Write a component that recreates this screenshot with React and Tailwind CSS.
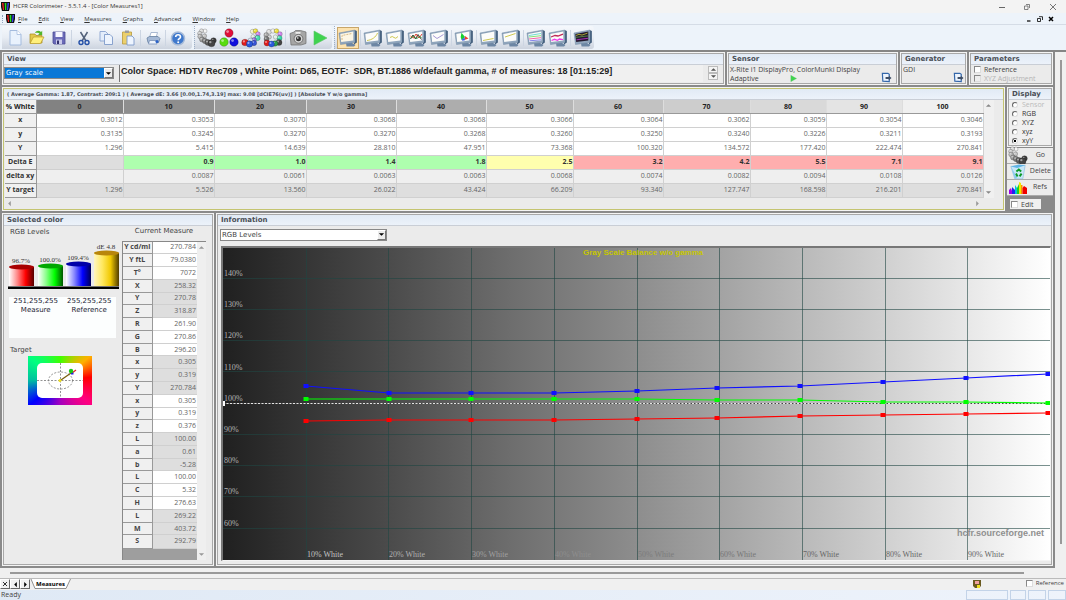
import { clsx } from 'clsx';

const menus = ['File', 'Edit', 'View', 'Measures', 'Graphs', 'Advanced', 'Window', 'Help'];

const columns = [
  { level: 0, head: 'bg-[#828282]', x: '0.3012', y: '0.3135', Y: '1.296', dE: '', dxy: '', target: '1.296', tone: '' },
  { level: 10, head: 'bg-[#8e8e8e]', x: '0.3053', y: '0.3245', Y: '5.415', dE: '0.9', dxy: '0.0087', target: '5.526', tone: 'bg-[#aeffae]' },
  { level: 20, head: 'bg-[#999999]', x: '0.3070', y: '0.3270', Y: '14.639', dE: '1.0', dxy: '0.0061', target: '13.560', tone: 'bg-[#aeffae]' },
  { level: 30, head: 'bg-[#a3a3a3]', x: '0.3068', y: '0.3270', Y: '28.810', dE: '1.4', dxy: '0.0063', target: '26.022', tone: 'bg-[#aeffae]' },
  { level: 40, head: 'bg-[#adadad]', x: '0.3068', y: '0.3268', Y: '47.951', dE: '1.8', dxy: '0.0063', target: '43.424', tone: 'bg-[#aeffae]' },
  { level: 50, head: 'bg-[#b7b7b7]', x: '0.3066', y: '0.3260', Y: '73.368', dE: '2.5', dxy: '0.0068', target: '66.209', tone: 'bg-[#ffffae]' },
  { level: 60, head: 'bg-[#c2c2c2]', x: '0.3064', y: '0.3250', Y: '100.320', dE: '3.2', dxy: '0.0074', target: '93.340', tone: 'bg-[#ffaeae]' },
  { level: 70, head: 'bg-[#cdcdcd]', x: '0.3062', y: '0.3240', Y: '134.572', dE: '4.2', dxy: '0.0082', target: '127.747', tone: 'bg-[#ffaeae]' },
  { level: 80, head: 'bg-[#d9d9d9]', x: '0.3059', y: '0.3226', Y: '177.420', dE: '5.5', dxy: '0.0094', target: '168.598', tone: 'bg-[#ffaeae]' },
  { level: 90, head: 'bg-[#e4e4e4]', x: '0.3054', y: '0.3211', Y: '222.474', dE: '7.1', dxy: '0.0108', target: '216.201', tone: 'bg-[#ffaeae]' },
  { level: 100, head: 'bg-[#f0f0f0]', x: '0.3046', y: '0.3193', Y: '270.841', dE: '9.1', dxy: '0.0126', target: '270.841', tone: 'bg-[#ffaeae]' },
];

const gridRows = [
  { label: 'x', key: 'x', bg: 'bg-white' },
  { label: 'y', key: 'y', bg: 'bg-white' },
  { label: 'Y', key: 'Y', bg: 'bg-white' },
  { label: 'Delta E', key: 'dE', bg: 'bg-[#dedede]' },
  { label: 'delta xy', key: 'dxy', bg: 'bg-[#efefef]' },
  { label: 'Y target', key: 'target', bg: 'bg-[#dedede]' },
];

const measures = [
  ['Y cd/ml', '270.784', false], ['Y ftL', '79.0380', false], ['T°', '7072', false],
  ['X', '258.32', true], ['Y', '270.78', true], ['Z', '318.87', true],
  ['R', '261.90', false], ['G', '270.86', false], ['B', '296.20', false],
  ['x', '0.305', true], ['y', '0.319', true], ['Y', '270.784', true],
  ['x', '0.305', false], ['y', '0.319', false], ['z', '0.376', false],
  ['L', '100.00', true], ['a', '0.61', true], ['b', '-5.28', true],
  ['L', '100.00', false], ['C', '5.32', false], ['H', '276.63', false],
  ['L', '269.22', true], ['M', '403.72', true], ['S', '292.79', true],
];

const plotX = [83, 166, 248, 331, 414, 494, 577, 660, 743, 825];
const series = [
  { color: '#1010ff', ys: [138, 145, 145, 145, 143, 140, 138, 134, 130, 126] },
  { color: '#00ff00', ys: [151, 151, 151, 151, 151, 152, 152, 154, 154, 155] },
  { color: '#ff0000', ys: [173, 172, 172, 172, 171, 170, 168, 167, 166, 165] },
];

/* ---------- icons ---------- */

function Ico({ children, size = 'size-5' }) {
  return <svg viewBox="0 0 20 20" className={size} aria-hidden="true">{children}</svg>;
}

function AppIcon() {
  return (
    <svg viewBox="0 0 9 9" className="size-[9px]" aria-hidden="true">
      <path d="M0 0h9v5l-1 4H1L0 5z" fill="#111" />
      <path d="M1 1h1.500l.5 7H2z" fill="#f22" />
      <path d="M3.700 1h1.600v7H4z" fill="#2d2" />
      <path d="M6.500 1H8L7 8H6z" fill="#44f" />
    </svg>
  );
}

function NewIcon() {
  return <Ico><path d="M5 2.500h7l4 4V17H5z" fill="#e9f2fd" stroke="#a3bbde" /><path d="M12 2.500v4h4" fill="#fff" stroke="#a3bbde" strokeWidth=".8" /></Ico>;
}

function OpenIcon() {
  return (
    <Ico>
      <path d="M3 6h5l1 1.500h6V15H3z" fill="#e2c84a" stroke="#a8891f" strokeWidth=".7" />
      <path d="M3 15.500 6.500 9H17l-3.500 6.500z" fill="#fff07c" stroke="#b89a28" strokeWidth=".7" />
      <path d="M8 5c1-2.500 4-3 6-1l1.200-1.200V7H11l1.500-1.600C11.500 4.500 10 4.500 8 5z" fill="#52b62c" />
    </Ico>
  );
}

function SaveIcon() {
  return (
    <Ico>
      <path d="M4 4h12v12H5l-1-1z" fill="#6a6ab8" stroke="#4c4c96" strokeWidth=".8" />
      <path d="M6.500 4h7v5h-7z" fill="#f5f5ff" /><path d="M7 11.500h6V16H7z" fill="#c9c9ea" /><path d="M8 12.500h2V16H8z" fill="#33336e" />
    </Ico>
  );
}

function CutIcon() {
  return (
    <Ico>
      <path d="M6.500 4 12 13M13.500 4 8 13" stroke="#53627a" strokeWidth="1.500" fill="none" />
      <circle cx="7" cy="14.500" r="2" fill="none" stroke="#2450a8" strokeWidth="1.400" /><circle cx="13" cy="14.500" r="2" fill="none" stroke="#2450a8" strokeWidth="1.400" />
    </Ico>
  );
}

function CopyIcon() {
  return (
    <Ico>
      <path d="M4 3.500h5.500L12 6v7H4z" fill="#e3edfb" stroke="#8aa4d0" strokeWidth=".9" />
      <path d="M8.500 6.500H14L16.500 9v7.500h-8z" fill="#edf4fe" stroke="#7f9bca" strokeWidth=".9" />
    </Ico>
  );
}

function PasteIcon() {
  return (
    <Ico>
      <path d="M4.500 4h9v12h-9z" fill="#ecd06c" stroke="#b99a3c" strokeWidth=".8" /><path d="M7 2.500h4V5H7z" fill="#9c9c9c" />
      <path d="M9 8h5l2 2v7H9z" fill="#eef5ff" stroke="#7d9ac9" strokeWidth=".9" />
    </Ico>
  );
}

function PrintIcon() {
  return (
    <Ico>
      <path d="M8 4.500h6.500l-1.500 5H6.500z" fill="#fff" stroke="#8a9fc0" strokeWidth=".7" />
      <path d="M4 10 6.500 8.500H15l2 2-1.500 4H5z" fill="#a5b9d6" stroke="#66809f" strokeWidth=".8" />
      <path d="M6.500 12.500h6.500l1 3.500H5.500z" fill="#eef4fc" stroke="#6e88b2" strokeWidth=".7" /><circle cx="14" cy="13.500" r="1.500" fill="#2b62c9" />
    </Ico>
  );
}

function HelpIcon() {
  return (
    <Ico>
      <circle cx="10" cy="10.500" r="6.500" fill="#3f78cc" stroke="#a9bcd8" strokeWidth="1.500" />
      <path d="M7.700 9c0-3 4.800-3 4.800 0 0 1.600-2.300 1.600-2.300 3.200" fill="none" stroke="#fff" strokeWidth="1.600" /><circle cx="10.200" cy="14.200" r="1" fill="#fff" />
    </Ico>
  );
}

function Balls({ balls, size }) {
  return (
    <Ico size={size}>
      {balls.map(([cx, cy, r, fill], i) => (
        <g key={i}>
          <circle cx={cx} cy={cy} r={r} fill={fill} stroke="#0006" strokeWidth=".5" />
          <circle cx={cx - r / 3} cy={cy - r / 3} r={r / 3} fill="#fff" opacity=".5" />
        </g>
      ))}
    </Ico>
  );
}

const grayBalls = [[8, 3, 2, '#f4f4f4'], [4.500, 2.800, 2, '#ddd'], [2.800, 5.500, 2.200, '#ccc'], [3, 8.500, 2.300, '#b8b8b8'], [7.500, 8, 2.200, '#c4c4c4'], [5, 11.500, 2.500, '#9a9a9a'], [8, 13, 2.700, '#808080'], [11, 14.500, 3, '#5c5c5c'], [16.500, 12.500, 2.800, '#3c3c3c'], [14.500, 15.300, 3.500, '#444']];
const primaryBalls = [[10, 5, 4.200, '#e0103a'], [5, 14, 4.300, '#58dc10'], [15, 14, 4.300, '#1010dd']];
const satBalls = [[11.500, 3.500, 2.200, '#f4f4d0'], [14.500, 3, 2.300, '#ecdf3c'], [17, 6, 2.300, '#d286ec'], [16.500, 10, 2.700, '#46dcb0'], [12, 8.500, 2, '#e4eee8'], [13, 12, 2.400, '#9a74e0'], [9.500, 12.500, 2.500, '#c8d8ec'], [4, 14.500, 3.300, '#e01c1c'], [13, 15, 2.700, '#3854d4'], [8.500, 16, 3.200, '#2a58dc']];
const allBalls = [[6, 3.800, 2.500, '#ddd'], [10, 3, 2.200, '#f0f0f0'], [13.500, 3, 2.300, '#ecdf3c'], [3.200, 7, 2.400, '#aaa'], [17, 6, 2.300, '#d286ec'], [16.500, 10, 2.600, '#3cd8a8'], [12.500, 9, 2.200, '#dfeee6'], [6.500, 9, 2, '#ccc'], [3.500, 11, 2.500, '#777'], [16, 14.500, 3, '#444'], [4, 15, 3, '#e01c1c'], [12, 15.500, 2.800, '#30a048'], [8.500, 16, 3, '#2a58dc']];

function CameraIcon() {
  return (
    <Ico>
      <path d="M2 5.500 6 4l1.500-1.500h5L18 4v11.500L13 17H3z" fill="#a6a6a6" stroke="#6c6c6c" strokeWidth=".7" />
      <path d="M7.500 4h5v1.800h-5z" fill="#eee" /><circle cx="10.500" cy="10.800" r="4.400" fill="#d8d8d8" stroke="#555" strokeWidth=".7" /><circle cx="10.500" cy="10.800" r="2.500" fill="#333" /><circle cx="9.800" cy="10" r=".8" fill="#fff" />
    </Ico>
  );
}

function PlayIcon({ size }) {
  return <Ico size={size}><path d="M4 3 17 10 4 17z" fill="#3fd34f" stroke="#5cc468" strokeWidth=".6" strokeLinejoin="round" /></Ico>;
}

function Monitor({ dark, cream, children }) {
  return (
    <Ico>
      <path d="M8 15h6l3.500 2-1.500 1.500H8.500z" fill="#6c86a4" />
      <path d="M16.500 2 18.800 3v11.500L16 16.500z" fill="#3c5877" />
      <path d="M1 5 17 2v12.500L2.500 16.500z" fill="#8fa5bc" stroke="#7089a2" strokeWidth=".5" />
      <path d="M2.300 6 15.300 3.500v9L3.200 14z" fill={dark ? '#241a2e' : cream ? '#fdf6e4' : '#fcfcfa'} />
      <g fill="none" strokeWidth=".9">{children}</g>
    </Ico>
  );
}

function ExportIcon() {
  return (
    <svg viewBox="0 0 12 12" className="size-[11px]" aria-hidden="true">
      <path d="M1.500 1.500h6l1.500 1v8l-7-.5z" fill="#edf4fd" stroke="#3467aa" strokeWidth="1.300" />
      <path d="M5 5.500h3.500V4L11.500 6.500 8.500 9V7.500H5z" fill="#3e4e66" />
    </svg>
  );
}

function BinIcon() {
  return (
    <Ico size="size-4">
      <path d="M1 3 19 1.500 16 18.500H6z" fill="#c9e7f8" stroke="#7fb6da" strokeWidth=".7" />
      <path d="M1 3 9 5l10-3.500-8-.8z" fill="#5fb4e6" /><path d="M1.500 3.500 6 18.500l3-1z" fill="#8ccaf0" />
      <path d="M8 9.500 11 7l3 2.500M14.500 12l-2.500 3.500M9.500 15.500 7.500 12" fill="none" stroke="#0c9a28" strokeWidth="2.400" />
    </Ico>
  );
}

function SpectrumIcon() {
  return (
    <svg viewBox="0 0 18 12" className="h-3 w-[18px]" aria-hidden="true">
      <path d="M0 12V8l2-2 1 3v3z" fill="#a000e8" /><path d="M3 12V5l3 3v4z" fill="#2020f0" /><path d="M6 12V3l2 3v6z" fill="#00c8d8" />
      <path d="M8 12V6l2-4v10z" fill="#20d020" /><path d="M10 12V0l2 1v11z" fill="#f0e800" /><path d="M12 12V3h1.500v9z" fill="#ff9000" /><path d="M13.500 12V6l1.500-2 3 2v6z" fill="#f00000" />
    </svg>
  );
}

/* ---------- small controls ---------- */

function Caret({ dir = 'down', className }) {
  const paths = { down: 'M1 2.500h6L4 5.500z', up: 'M1 5.500h6L4 2.500z', left: 'M5.500 1v6L2.500 4z', right: 'M2.500 1v6l3-3z' };
  return <svg viewBox="0 0 8 8" className={clsx('size-[7px]', className)} aria-hidden="true"><path d={paths[dir]} fill="currentColor" /></svg>;
}

function ComboBox({ label, options, selected, className }) {
  return (
    <div className={clsx('relative h-3 border border-[#888] bg-white', className)}>
      <select aria-label={label} className={clsx('block h-full w-full appearance-none px-px text-[7px] leading-[10px] outline-none font-["DejaVu_Sans"]', selected ? 'bg-[#0a78d7] text-white' : 'text-[#444]')}>
        {options.map((o) => <option key={o}>{o}</option>)}
      </select>
      <span className="pointer-events-none absolute inset-y-0 right-0 flex w-[9px] items-center justify-center border border-t-white border-l-white border-r-[#777] border-b-[#777] bg-[#ececec] text-black">
        <Caret />
      </span>
    </div>
  );
}

function Check({ label, disabled, className, size = 'text-[7px]' }) {
  return (
    <label className={clsx('flex items-center gap-[3px] leading-[9px]', size, disabled ? 'text-[#b5b5b5]' : 'text-[#444]', className)}>
      <input type="checkbox" disabled={disabled} className="size-[7px] appearance-none border border-t-[#888] border-l-[#888] border-r-[#ddd] border-b-[#ddd] bg-white checked:bg-[#333] disabled:bg-[#eee]" />
      {label}
    </label>
  );
}

function Panel({ title, className, frame = 'border-[#a8a8a8]', titleSize = 'text-[7px]', children }) {
  return (
    <section className={clsx('flex min-w-0 flex-col border border-[#f4f4f4]', className)}>
      <div className={clsx('flex flex-1 flex-col border bg-[#ebebeb]', frame)}>
        <h2 className={clsx("truncate border-b border-[#c9ced6] bg-gradient-to-b from-[#e1eaf5] to-[#ecf2fa] px-[3px] font-['DejaVu_Sans'] leading-[10px] font-bold text-[#4a4f57]", titleSize)}>{title}</h2>
        {children}
      </div>
    </section>
  );
}

/* ---------- bars ---------- */

function TitleBar() {
  return (
    <header className="flex h-[13px] items-center gap-[3px] bg-[#f3f3f3] pl-px text-[6px] text-[#333]">
      <AppIcon />
      <h1 className="flex-1">HCFR Colorimeter - 3.5.1.4 - [Color Measures1]</h1>
      <div className="flex items-center pr-[10px] text-[#666]">
        <button aria-label="Minimize" className="flex w-[25px] justify-center"><svg viewBox="0 0 6 6" className="size-[6px]"><path d="M0 3.500h6" stroke="currentColor" /></svg></button>
        <button aria-label="Restore" className="flex w-[25px] justify-center"><svg viewBox="0 0 6 6" className="size-[6px]" fill="none" stroke="currentColor" strokeWidth=".8"><path d="M.5 2h3.500v3.500H.5zM2 .5h3.500V4" /></svg></button>
        <button aria-label="Close" className="flex w-[17px] justify-end"><svg viewBox="0 0 6 6" className="size-[6px]"><path d="M0 0l6 6M6 0 0 6" stroke="currentColor" strokeWidth=".9" /></svg></button>
      </div>
    </header>
  );
}

function MenuBar() {
  return (
    <nav className="flex h-3 items-center border-b border-[#d5dce6] bg-[#edf3fa] pr-3 pl-[2px] text-[#333]">
      <span className="mr-[3px] h-2 border-l border-dotted border-[#8fa3bd]" />
      <AppIcon />
      <div className="flex flex-1 gap-[11px] pl-[3px] text-[6px]">
        {menus.map((m) => (
          <button key={m} className="leading-[10px]"><span className="underline">{m[0]}</span>{m.slice(1)}</button>
        ))}
      </div>
      <div className="flex items-center gap-[5px] text-black">
        <button aria-label="Minimize document"><svg viewBox="0 0 6 6" className="block size-[6px]"><path d="M1 5h3.500" stroke="currentColor" strokeWidth="1.200" /></svg></button>
        <button aria-label="Restore document"><svg viewBox="0 0 6 6" className="block size-[6px]" fill="none" stroke="currentColor" strokeWidth=".8"><path d="M.5 2.500h3v3h-3zM2 .7h3.500V4" /></svg></button>
        <button aria-label="Close document"><svg viewBox="0 0 6 6" className="block size-[6px]"><path d="M1 1l4 4M5 1 1 5" stroke="currentColor" strokeWidth="1.500" /></svg></button>
      </div>
    </nav>
  );
}

function Tool({ label, active, children }) {
  return (
    <button aria-label={label} className={clsx('flex h-[22px] w-[22px] items-center justify-center', active && 'border border-[#c8a66a] bg-[#fde2ad]')}>
      {children}
    </button>
  );
}

function Sep() {
  return <span className="mx-px h-4 w-px bg-[#ccd5e2]" />;
}

function ToolGroup({ className, children }) {
  return (
    <div className={clsx('flex h-[23px] items-center rounded-r-[3px] bg-gradient-to-b from-[#f5f8fc] via-[#e8edf4] to-[#cdd4df]', className)}>{children}</div>
  );
}

function Toolbar() {
  return (
    <div className="flex h-[25px] items-center gap-[2px] bg-[#edf3fa] pl-[2px]">
      <ToolGroup className="pr-[3px] pl-[2px]">
        <Tool label="New"><NewIcon /></Tool>
        <Tool label="Open"><OpenIcon /></Tool>
        <Tool label="Save"><SaveIcon /></Tool>
        <Sep />
        <Tool label="Cut"><CutIcon /></Tool>
        <Tool label="Copy"><CopyIcon /></Tool>
        <Tool label="Paste"><PasteIcon /></Tool>
        <Sep />
        <Tool label="Print"><PrintIcon /></Tool>
        <Sep />
        <Tool label="Help"><HelpIcon /></Tool>
      </ToolGroup>
      <ToolGroup className="border-l border-dotted border-[#9db0c8] pr-px pl-px">
        <Tool label="Gray scale measures"><Balls balls={grayBalls} /></Tool>
        <Tool label="Primaries"><Balls balls={primaryBalls} /></Tool>
        <Tool label="Saturations"><Balls balls={satBalls} /></Tool>
        <Tool label="All measures"><Balls balls={allBalls} /></Tool>
        <Sep />
        <Tool label="Capture"><CameraIcon /></Tool>
        <Tool label="Run"><PlayIcon /></Tool>
      </ToolGroup>
      <ToolGroup className="border-l border-dotted border-[#9db0c8] pl-[2px]">
        <Tool label="RGB levels" active><Monitor cream><path d="M4 12V7.500l10-2" stroke="#d4b27a" strokeDasharray="2 1" /></Monitor></Tool>
        <Sep />
        <Tool label="Luminance"><Monitor><path d="M4 12.500C9 12 13 9 14.500 5" stroke="#c8c23c" /></Monitor></Tool>
        <Tool label="Gamma"><Monitor><path d="M5 9.500q2.500-2 4 0t4-1" stroke="#c8c23c" /></Monitor></Tool>
        <Tool label="Color temperature"><Monitor><path d="M3.500 11 6 7l2.500 4L11 6.500l3.500 5" stroke="#222" /><path d="m3.500 8 3 2L9 6l3 4 3-4" stroke="#e03020" /><path d="m3.500 10 3-2 3 3 3-3 2 2" stroke="#2a9a3a" /></Monitor></Tool>
        <Tool label="Near black"><Monitor><path d="m4 7.500 4 3 6.500-4" stroke="#9c8cd0" /></Monitor></Tool>
        <Sep />
        <Tool label="CIE chart"><Monitor><path d="M7.500 4.800Q6 9 7.500 12l3.500-3z" fill="#14d030" stroke="none" /><path d="m11 8 3.500 2.500L10.500 12z" fill="#f04030" stroke="none" /><path d="m7.500 11.800 3-2.500.5 3-2.500.5z" fill="#4060e0" stroke="none" /></Monitor></Tool>
        <Sep />
        <Tool label="Shadow luminance"><Monitor><path d="m4 12.500 10.500-2" stroke="#c8c23c" /></Monitor></Tool>
        <Tool label="Highlight luminance"><Monitor><path d="m4 9 10.500-3.500" stroke="#c8c23c" /></Monitor></Tool>
        <Sep />
        <Tool label="Saturation luminance"><Monitor><path d="m3 7.500 12-2" stroke="#5ed8d0" /><path d="m3 9 12-1.300" stroke="#7add6a" /><path d="M3 11 15 9.700" stroke="#f050a0" /><path d="m3.500 12.800 11.500-1" stroke="#7474e8" /></Monitor></Tool>
        <Tool label="Saturation shift"><Monitor><path d="m3 9 4-1.500 3 .5 5-1.800" stroke="#c02858" strokeWidth="1.300" /><path d="m3.500 12.500 3-1.200 3 1 2-1.300 3.500.7" stroke="#f03ce8" strokeWidth="1.300" /></Monitor></Tool>
        <Sep />
        <Tool label="Measures history"><Monitor dark><path d="m3 7.500 3-1.200 3 .8 5.500-2" stroke="#b4b430" /><path d="m3 9.300 5-.6 7-.8" stroke="#588848" /><path d="m3.500 11.800 11.500-1.500" stroke="#b030c0" /></Monitor></Tool>
      </ToolGroup>
    </div>
  );
}

/* ---------- top row ---------- */

function TopRow() {
  return (
    <div className="flex gap-[2px]">
      <Panel title="View" className="flex-1">
        <div className="flex flex-1 items-start gap-[5px] pr-[5px]">
          <ComboBox label="View" options={['Gray scale', 'Near black', 'Near white', 'Primaries']} selected className="mt-[2px] w-[110px]" />
          <div className="h-[17px] min-w-0 flex-1 overflow-hidden border-l border-[#777] bg-[#f0f0f0] pl-px font-['Liberation_Sans'] text-[9px] leading-[13px] font-bold whitespace-pre text-[#222]">
            {'Color Space: HDTV Rec709 , White Point: D65, EOTF:  SDR, BT.1886 w/default gamma, # of measures: 18 [01:15:29]'}
          </div>
          <div className="mt-px flex flex-col text-[#555]">
            <button aria-label="Previous" className="flex h-[7px] w-[10px] items-center justify-center border border-[#bbb] bg-[#f4f4f4]"><Caret dir="up" /></button>
            <button aria-label="Next" className="flex h-[7px] w-[10px] items-center justify-center border border-[#bbb] bg-[#f4f4f4]"><Caret /></button>
          </div>
        </div>
      </Panel>
      <Panel title="Sensor" className="w-[171px]">
        <div className="flex flex-1 justify-between pr-1 pl-px text-[7px] leading-[9px] text-[#444]">
          <div>
            <p className="whitespace-nowrap">X-Rite i1 DisplayPro, ColorMunki Display</p>
            <p className="flex items-center gap-[30px]">Adaptive <PlayIcon size="size-[9px]" /></p>
          </div>
          <button aria-label="Configure sensor" className="self-end"><ExportIcon /></button>
        </div>
      </Panel>
      <Panel title="Generator" className="w-[67px]">
        <div className="flex flex-1 justify-between px-px text-[7px] leading-[9px] text-[#444]">
          GDI
          <button aria-label="Configure generator" className="self-end"><ExportIcon /></button>
        </div>
      </Panel>
      <Panel title="Parameters" className="w-[84px]">
        <div className="flex flex-col pl-[3px]">
          <Check label="Reference" />
          <Check label="XYZ Adjustment" disabled />
        </div>
      </Panel>
    </div>
  );
}

/* ---------- measures grid ---------- */

function MeasuresGrid() {
  return (
    <Panel
      title="( Average Gamma: 1.87, Contrast: 209:1 ) ( Average dE: 3.66 [0.00,1.74,3.19] max: 9.08 [dCIE76(uv)] ) [Absolute Y w/o gamma]"
      titleSize="text-[5px]"
      frame="border-[#c4c470]"
      className="flex-1"
    >
      <div className="flex pr-[12px] pl-px">
        <table className="w-full table-fixed border-collapse text-[7px]">
          <colgroup>
            <col className="w-[31px]" /><col className="w-[87px]" /><col className="w-[91px]" /><col className="w-[92px]" />
            <col className="w-[90px]" /><col className="w-[90px]" /><col className="w-[87px]" /><col className="w-[90px]" />
            <col className="w-[87px]" /><col className="w-[76px]" /><col className="w-[76px]" /><col className="w-[81px]" />
          </colgroup>
          <thead>
            <tr className="h-[13px] leading-[11px] text-[#222]">
              <th className="border-r border-b border-[#999] bg-[#f0f0f0]">% White</th>
              {columns.map((c) => <th key={c.level} className={clsx('border-r border-b border-r-[#ddd] border-b-[#999]', c.head)}>{c.level}</th>)}
            </tr>
          </thead>
          <tbody>
            {gridRows.map((r) => (
              <tr key={r.key} className="h-[14px] leading-3">
                <th className="border-r border-b border-[#999] bg-[#f0f0f0] whitespace-nowrap text-[#333]">{r.label}</th>
                {columns.map((c) => (
                  <td key={c.level} className={clsx('border-r border-b border-[#d0d0d0] text-right', r.key === 'dE' ? [c.tone || r.bg, 'font-bold text-[#333]'] : [r.bg, 'text-[#666]'])}>{c[r.key]}</td>
                ))}
              </tr>
            ))}
          </tbody>
        </table>
        <div className="flex w-[10px] shrink-0 flex-col items-center justify-between bg-[#f0f0f0] py-[2px] text-[#888]">
          <Caret dir="up" /><Caret />
        </div>
      </div>
      <div className="flex h-[11px] items-center justify-between pr-[22px] pl-[2px] text-[#999]">
        <Caret dir="left" /><Caret dir="right" />
      </div>
    </Panel>
  );
}

function SideColumn() {
  return (
    <div className="flex w-[46px] flex-col">
      <Panel title="Display">
        <fieldset className="flex flex-col bg-[#f0f0f0] pl-[3px]">
          {['Sensor', 'RGB', 'XYZ', 'xyz', 'xyY'].map((o) => (
            <label key={o} className={clsx('flex items-center gap-1 text-[7px] leading-[9px]', o === 'Sensor' ? 'text-[#bbb]' : 'text-[#333]')}>
              <input type="radio" name="display" defaultChecked={o === 'xyY'} disabled={o === 'Sensor'} className="size-[6px] appearance-none rounded-full border border-t-[#666] border-l-[#666] border-r-[#ddd] border-b-[#ddd] bg-white checked:bg-[radial-gradient(#000_35%,#fff_45%)]" />
              {o}
            </label>
          ))}
        </fieldset>
      </Panel>
      <div className="mt-px flex flex-col text-[7px] text-[#444]">
        <button className="flex h-4 items-center justify-between border-b border-[#aaa] bg-[#ececec] pr-2 pl-px"><Balls balls={grayBalls} />Go</button>
        <button className="flex h-4 items-center justify-between border-b border-[#aaa] bg-[#ececec] pr-[2px] pl-[3px]"><BinIcon />Delete</button>
        <button className="flex h-4 items-center justify-between border-b border-[#aaa] bg-[#ececec] pr-[6px] pl-[2px]"><SpectrumIcon />Refs</button>
      </div>
      <Check label="Edit" className="mt-[3px] ml-[3px] h-[10px] w-[31px] bg-[#f0f0f0] pl-px" />
    </div>
  );
}

/* ---------- selected color ---------- */

function Cylinder({ x, top, id, label, colors, lid }) {
  return (
    <g>
      <defs>
        <linearGradient id={id}>
          {colors.map((c, i) => <stop key={i} offset={i / (colors.length - 1)} stopColor={c} />)}
        </linearGradient>
      </defs>
      <path d={`M${x} ${top}h25v${44 - top}h-25z`} fill={`url(#${id})`} />
      <ellipse cx={x + 12.5} cy={top} rx="12.5" ry="2.5" fill={lid} />
      <text x={x + 12} y={top - 4} textAnchor="middle" className="fill-[#333] font-['Liberation_Serif'] text-[7px]">{label}</text>
    </g>
  );
}

function LevelBars() {
  return (
    <svg viewBox="0 0 111 48" className="block w-[111px]" role="img" aria-label="RGB levels">
      <Cylinder x={1} top={25} id="red" label="96.7%" colors={['#fff', '#f88', '#f00', '#500']} lid="#a80000" />
      <Cylinder x={30} top={24} id="green" label="100.0%" colors={['#fff', '#8f8', '#0f0', '#050']} lid="#00a800" />
      <Cylinder x={58} top={22} id="blue" label="109.4%" colors={['#fff', '#88f', '#00f', '#005']} lid="#0000a8" />
      <Cylinder x={86} top={11} id="gold" label="dE 4.8" colors={['#fff6c0', '#ffe860', '#f0c800', '#503c00']} lid="#b8860b" />
      <path d="M0 44.500h111v2.500H0z" />
    </svg>
  );
}

function TargetView() {
  return (
    <div className="h-[49px] w-16 bg-[conic-gradient(from_-53deg,#00ff80,#40ff00_15%,#ffb000_29%,#ff0000_38%,#ff0080_50%,#a000c0_65%,#0000ff_79%,#00c0a0_90%,#00ff80)] px-[9px] py-[7px]">
      <div className="h-full w-full rounded-[5px] bg-white">
        <svg viewBox="0 0 46 35" className="block h-full w-full" role="img" aria-label="Target">
          <g fill="none" stroke="#777" strokeWidth=".8" strokeDasharray="2 1.5">
            <path d="M0 17.500h46M23.500 0v35" /><ellipse cx="23.500" cy="17.500" rx="12" ry="8.500" />
          </g>
          <path d="m22.500 18 13-9" stroke="#7a6010" strokeWidth="1.300" />
          <circle cx="23" cy="17.500" r="1.500" fill="#f0e020" />
          <path d="m35 10 4-3" stroke="#e02020" strokeWidth="1.200" /><path d="M34 10.500h2.500" stroke="#2020e0" strokeWidth="2" /><circle cx="34" cy="8" r="2.200" fill="#18c818" />
        </svg>
      </div>
    </div>
  );
}

function SelectedColor() {
  return (
    <Panel title="Selected color" className="w-[212px]">
      <div className="flex flex-1">
        <div className="flex w-[118px] shrink-0 flex-col pl-1 text-[7px] text-[#444]">
          <h3 className="ml-[2px] h-4 font-['DejaVu_Sans'] leading-3">RGB Levels</h3>
          <LevelBars />
          <div className="mt-[7px] ml-px flex h-[41px] w-[107px] justify-around bg-[#fcfefe] text-center font-['DejaVu_Sans'] leading-[9px] text-[#223]">
            <p>251,255,255<br />Measure</p>
            <p>255,255,255<br />Reference</p>
          </div>
          <h3 className="mt-[7px] ml-[2px] font-['DejaVu_Sans'] leading-[11px]">Target</h3>
          <div className="ml-5"><TargetView /></div>
        </div>
        <div className="flex flex-1 flex-col pr-[6px] pb-1">
          <h3 className="h-[15px] text-center font-['DejaVu_Sans'] text-[7px] leading-[11px] text-[#444]">Current Measure</h3>
          <div className="flex flex-1 border-t border-l border-[#888] bg-[#9e9e9e]">
            <table className="h-[307px] flex-1 border-collapse text-[7px] leading-[10px]">
              <tbody>
                {measures.map(([name, value, shaded], i) => (
                  <tr key={i}>
                    <th className="w-[29px] border-r border-b border-[#999] bg-[#f0f0f0] p-0 whitespace-nowrap text-[#444]">{name}</th>
                    <td className={clsx('border-b border-[#d0d0d0] p-0 pr-px text-right text-[#666]', shaded ? 'bg-[#dedede]' : 'bg-white')}>{value}</td>
                  </tr>
                ))}
              </tbody>
            </table>
            <div className="flex w-[9px] flex-col items-center justify-between bg-[#efefef] py-[2px] text-[#999]"><Caret dir="up" /><Caret /></div>
          </div>
        </div>
      </div>
    </Panel>
  );
}

/* ---------- chart ---------- */

const levelFills = ['fill-[#c4c4c4]', 'fill-[#b0b0b0]', 'fill-[#a0a0a0]', 'fill-[#8e8e8e]', 'fill-[#7c7c7c]', 'fill-[#777]', 'fill-[#666]', 'fill-[#666]', 'fill-[#666]'];

function BalanceChart() {
  return (
    <svg viewBox="0 0 827 312" className="block w-full" role="img" aria-label="Gray Scale Balance">
      <defs>
        <linearGradient id="ramp">
          <stop offset="0" stopColor="#202020" />
          <stop offset=".21" stopColor="#4d4d4d" />
          <stop offset=".35" stopColor="#6e6e6e" />
          <stop offset=".58" stopColor="#9e9e9e" />
          <stop offset=".8" stopColor="#d0d0d0" />
          <stop offset="1" stopColor="#ffffff" />
        </linearGradient>
      </defs>
      <rect width="827" height="312" fill="url(#ramp)" />
      <g stroke="#1f4643" strokeOpacity=".6" strokeWidth="1">
        {[1, 2, 3, 4, 5, 6, 7, 8, 9].map((i) => <path key={i} d={`M${Math.round(i * 82.7) + 0.5} 0v312`} />)}
        {[30, 61, 92, 123, 186, 217, 248, 280].map((y) => <path key={y} d={`M0 ${y + 0.5}h827`} />)}
      </g>
      <path d="M0 155.500h827" stroke="#444" /><path d="M0 155.500h827" stroke="#e4e4e4" strokeDasharray="2 1.5" />
      <rect y="153" width="2" height="5" fill="#fff" />
      <g className="fill-[#b4b4b4] font-['Liberation_Serif'] text-[8px]">
        {[140, 130, 120, 110, 100, 90, 80, 70, 60].map((v, i) => <text key={v} x="1" y={Math.round(28 + i * 31.2)}>{v}%</text>)}
        {levelFills.map((fill, i) => (
          <text key={fill + i} x={Math.round((i + 1) * 82.7) + 1} y="309" className={fill}>{(i + 1) * 10}% White</text>
        ))}
      </g>
      {series.map((s) => (
        <g key={s.color}>
          <polyline points={s.ys.map((y, i) => `${plotX[i]},${y}`).join(' ')} fill="none" stroke={s.color} strokeWidth="1.200" />
          {s.ys.map((y, i) => <rect key={i} x={plotX[i] - 2.5} y={y - 2} width="5" height="4" fill={s.color} />)}
        </g>
      ))}
      <text x="420" y="7" textAnchor="middle" className="fill-[#c6c600] font-['Liberation_Sans'] text-[8px] font-bold">Gray Scale Balance w/o gamma</text>
      <text x="821" y="288" textAnchor="end" className="fill-[#8f8f8f] font-['Liberation_Sans'] text-[9px] font-bold">hcfr.sourceforge.net</text>
    </svg>
  );
}

function Information() {
  return (
    <Panel title="Information" className="flex-1">
      <div className="py-[3px] pl-[2px]">
        <ComboBox label="Graph" options={['RGB Levels', 'Luminance', 'Gamma', 'Color temperature']} className="w-[167px]" />
        <div className="mt-[5px] ml-px border-t-2 border-r border-b border-l-2 border-t-[#777] border-r-[#f4f4f4] border-b-[#f4f4f4] border-l-[#777]">
          <BalanceChart />
        </div>
      </div>
    </Panel>
  );
}

/* ---------- bottom ---------- */

function SheetTabs() {
  return (
    <div className="flex h-3 items-start border-t border-[#bbb] bg-[#f0f0f0]">
      <div className="flex">
        {[['Close sheet', 'x'], ['Previous sheet', 'left'], ['Next sheet', 'right']].map(([label, kind]) => (
          <button key={kind} aria-label={label} className="flex h-[10px] w-[10px] items-center justify-center border border-t-white border-l-white border-r-[#666] border-b-[#666] text-black">
            {kind === 'x' ? <svg viewBox="0 0 6 6" className="size-[6px]"><path d="M1 1l4 4M5 1 1 5" stroke="currentColor" strokeWidth=".8" /></svg> : <Caret dir={kind} />}
          </button>
        ))}
      </div>
      <button className="relative h-[10px] w-[41px] text-center text-[6px] leading-[10px] font-bold text-black">
        <svg viewBox="0 0 41 10" className="absolute inset-0 h-full w-full" aria-hidden="true"><path d="M1 0 5 9.500h31L40.500 0" fill="#fff" stroke="#777" strokeWidth=".8" /></svg>
        <span className="relative">Measures</span>
      </button>
      <div className="ml-auto flex items-center gap-[45px] pr-[2px]">
        <svg viewBox="0 0 8 8" className="size-2" aria-hidden="true"><path d="M0 0h8v6L6 8H2L0 6z" fill="#6a5a20" /><path d="M2 1h4v3H2z" fill="#f0a0a0" /><path d="M4 5h3v3H4z" fill="#f0e020" /></svg>
        <Check label="Reference" size="text-[6px]" />
      </div>
    </div>
  );
}

function StatusBar() {
  return (
    <footer className="flex h-[10px] items-center justify-between bg-gradient-to-r from-[#dfe9f5] to-[#eef3fb] pl-px text-[7px] leading-[10px] text-[#444]">
      Ready
      <div className="flex h-full gap-[2px]">
        <span className="w-[42px] border border-[#c3d3e8]" /><span className="w-4 border border-[#c3d3e8]" />
        <span className="w-[18px] border border-[#c3d3e8]" /><span className="w-[18px] border border-[#c3d3e8]" />
      </div>
    </footer>
  );
}

export default function App() {
  return (
    <div className="flex min-h-screen flex-col bg-[#f0f0f0] font-['Open_Sans','Noto_Sans',sans-serif]">
      <TitleBar />
      <MenuBar />
      <Toolbar />
      <div className="flex border-t-2 border-[#858585]">
        <main className="flex min-w-0 flex-1 flex-col gap-[2px] bg-[#8a8a8a] px-[2px] pb-[2px]">
          <TopRow />
          <div className="flex gap-[2px]">
            <MeasuresGrid />
            <SideColumn />
          </div>
          <div className="flex gap-[2px]">
            <SelectedColor />
            <Information />
          </div>
        </main>
        <div className="flex w-[11px] justify-center pt-2 pb-6"><span className="w-[2px] bg-[#999]" /></div>
      </div>
      <div className="flex flex-1 items-center pr-[42px] pl-[10px]"><span className="h-[2px] flex-1 bg-[#999]" /></div>
      <SheetTabs />
      <StatusBar />
    </div>
  );
}
